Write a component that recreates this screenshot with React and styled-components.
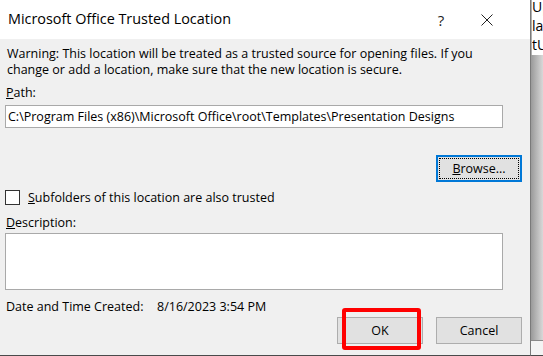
import React from "react";
import styled, { createGlobalStyle } from "styled-components";

const GlobalStyle = createGlobalStyle`
  html, body { margin: 0; padding: 0; background: #ffffff; overflow: hidden; }
  * { box-sizing: border-box; }
`;

const FONT = `"Open Sans", "Noto Sans", "Liberation Sans", sans-serif`;

const Screen = styled.div`
  display: flex;
  width: 543px;
  height: 356px;
  overflow: hidden;
  font-family: ${FONT};
  color: #000;
`;

const Dialog = styled.div`
  width: 531px;
  height: 356px;
  flex: none;
  display: flex;
  flex-direction: column;
  background: #f0f0f0;
  border-right: 1px solid #7a7a7a;
  border-bottom: 1px solid #4a4a4a;
`;

const TitleBar = styled.div`
  height: 39px;
  flex: none;
  display: flex;
  align-items: center;
  background: #ffffff;
  padding-left: 8px;
  padding-right: 15px;
`;

const Title = styled.div`
  flex: 1;
  font-size: 14.4px;
  color: #000;
  padding-bottom: 3px;
`;

const TitleButton = styled.div`
  width: ${(p) => p.$w}px;
  height: 39px;
  display: flex;
  align-items: center;
  justify-content: center;
  font-size: 15px;
  color: #222;
`;

const Body = styled.div`
  flex: 1;
  display: flex;
  flex-direction: column;
  padding: 7px 27px 0 5px;
  font-size: 12.5px;
`;

const Warning = styled.p`
  margin: 0 0 0 2px;
  line-height: 16px;
  white-space: nowrap;
`;

const Label = styled.div`
  margin: ${(p) => p.$m || "0"};
  padding-left: 1px;
  line-height: 15px;
`;

const TextBox = styled.div`
  width: 498px;
  height: ${(p) => p.$h}px;
  background: #fff;
  border: 1px solid #a9a9a9;
  padding: 3px 2px;
  line-height: 15px;
  white-space: nowrap;
  overflow: hidden;
  margin-top: ${(p) => p.$mt || 0}px;
`;

const ButtonRow = styled.div`
  display: flex;
  justify-content: flex-end;
  gap: 13px;
  margin-top: ${(p) => p.$mt}px;
  margin-right: -19px;
`;

const Button = styled.div`
  position: relative;
  width: 86px;
  height: 27px;
  display: flex;
  align-items: center;
  justify-content: center;
  background: #e1e1e1;
  border: ${(p) => (p.$focused ? "2px solid #0078d7" : "1px solid #adadad")};
  font-size: 12.5px;
  &::after {
    content: "";
    display: ${(p) => (p.$focused ? "block" : "none")};
    position: absolute;
    inset: 1px;
    border: 1px dotted #000;
  }
`;

const Highlight = styled.div`
  position: absolute;
  left: 4px;
  top: -10px;
  width: 79px;
  height: 42px;
  border: 4px solid #ff0000;
  border-radius: 3px;
`;

const CheckRow = styled.label`
  display: flex;
  align-items: center;
  gap: 8px;
  margin-top: 7px;
  height: 16px;
`;

const CheckBox = styled.span`
  width: 15px;
  height: 15px;
  border: 1px solid #333;
  background: #fff;
`;

const InfoRow = styled.div`
  display: flex;
  margin-top: 9px;
  padding-left: 1px;
  line-height: 15px;
`;

const InfoKey = styled.span`
  width: 151px;
`;

const Side = styled.div`
  flex: 1;
  display: flex;
  flex-direction: column;
`;

const SideText = styled.div`
  height: 55px;
  background: #fff;
  border-left: 1px solid #b0b0b0;
  overflow: hidden;
`;

const SideLines = styled.div`
  margin-top: -3px;
  font-size: 14px;
  line-height: 19px;
  white-space: nowrap;
`;

const SideShadow = styled.div`
  flex: 1;
  background: linear-gradient(to right, #9a9a9a, #d8d8d8 60%, #e8e8e8);
  border-bottom: 1px solid #8a8a8a;
`;

const SideBottom = styled.div`
  height: 15px;
  background: #f4f4f4;
  border-bottom: 1px solid #4a4a4a;
`;

export default function App() {
  return (
    <>
      <GlobalStyle />
      <Screen>
        <Dialog>
          <TitleBar>
            <Title>Microsoft Office Trusted Location</Title>
            <TitleButton $w={36}>?</TitleButton>
            <TitleButton $w={56}>
              <svg width="12" height="12" viewBox="0 0 12 12">
                <path d="M0.5 0.5 L11.5 11.5 M11.5 0.5 L0.5 11.5" stroke="#222" strokeWidth="1" fill="none" />
              </svg>
            </TitleButton>
          </TitleBar>
          <Body>
            <Warning>
              Warning: This location will be treated as a trusted source for opening files. If you
              <br />
              change or add a location, make sure that the new location is secure.
            </Warning>
            <Label $m="7px 0 0 0">
              <u>P</u>ath:
            </Label>
            <TextBox $h={23} $mt={5}>
              C:\Program Files (x86)\Microsoft Office\root\Templates\Presentation Designs
            </TextBox>
            <ButtonRow $mt={27}>
              <Button $focused>
                <span>
                  <u>B</u>rowse...
                </span>
              </Button>
            </ButtonRow>
            <CheckRow>
              <CheckBox />
              <span>
                <u>S</u>ubfolders of this location are also trusted
              </span>
            </CheckRow>
            <Label $m="10px 0 0 0">
              <u>D</u>escription:
            </Label>
            <TextBox $h={57} $mt={3} />
            <InfoRow>
              <InfoKey>Date and Time Created:</InfoKey>
              <span>8/16/2023 3:54 PM</span>
            </InfoRow>
            <ButtonRow $mt={3}>
              <Button>
                OK
                <Highlight />
              </Button>
              <Button>Cancel</Button>
            </ButtonRow>
          </Body>
        </Dialog>
        <Side>
          <SideText>
            <SideLines>
              Up
              <br />
              la
              <br />
              tU
            </SideLines>
          </SideText>
          <SideShadow />
          <SideBottom />
        </Side>
      </Screen>
    </>
  );
}
